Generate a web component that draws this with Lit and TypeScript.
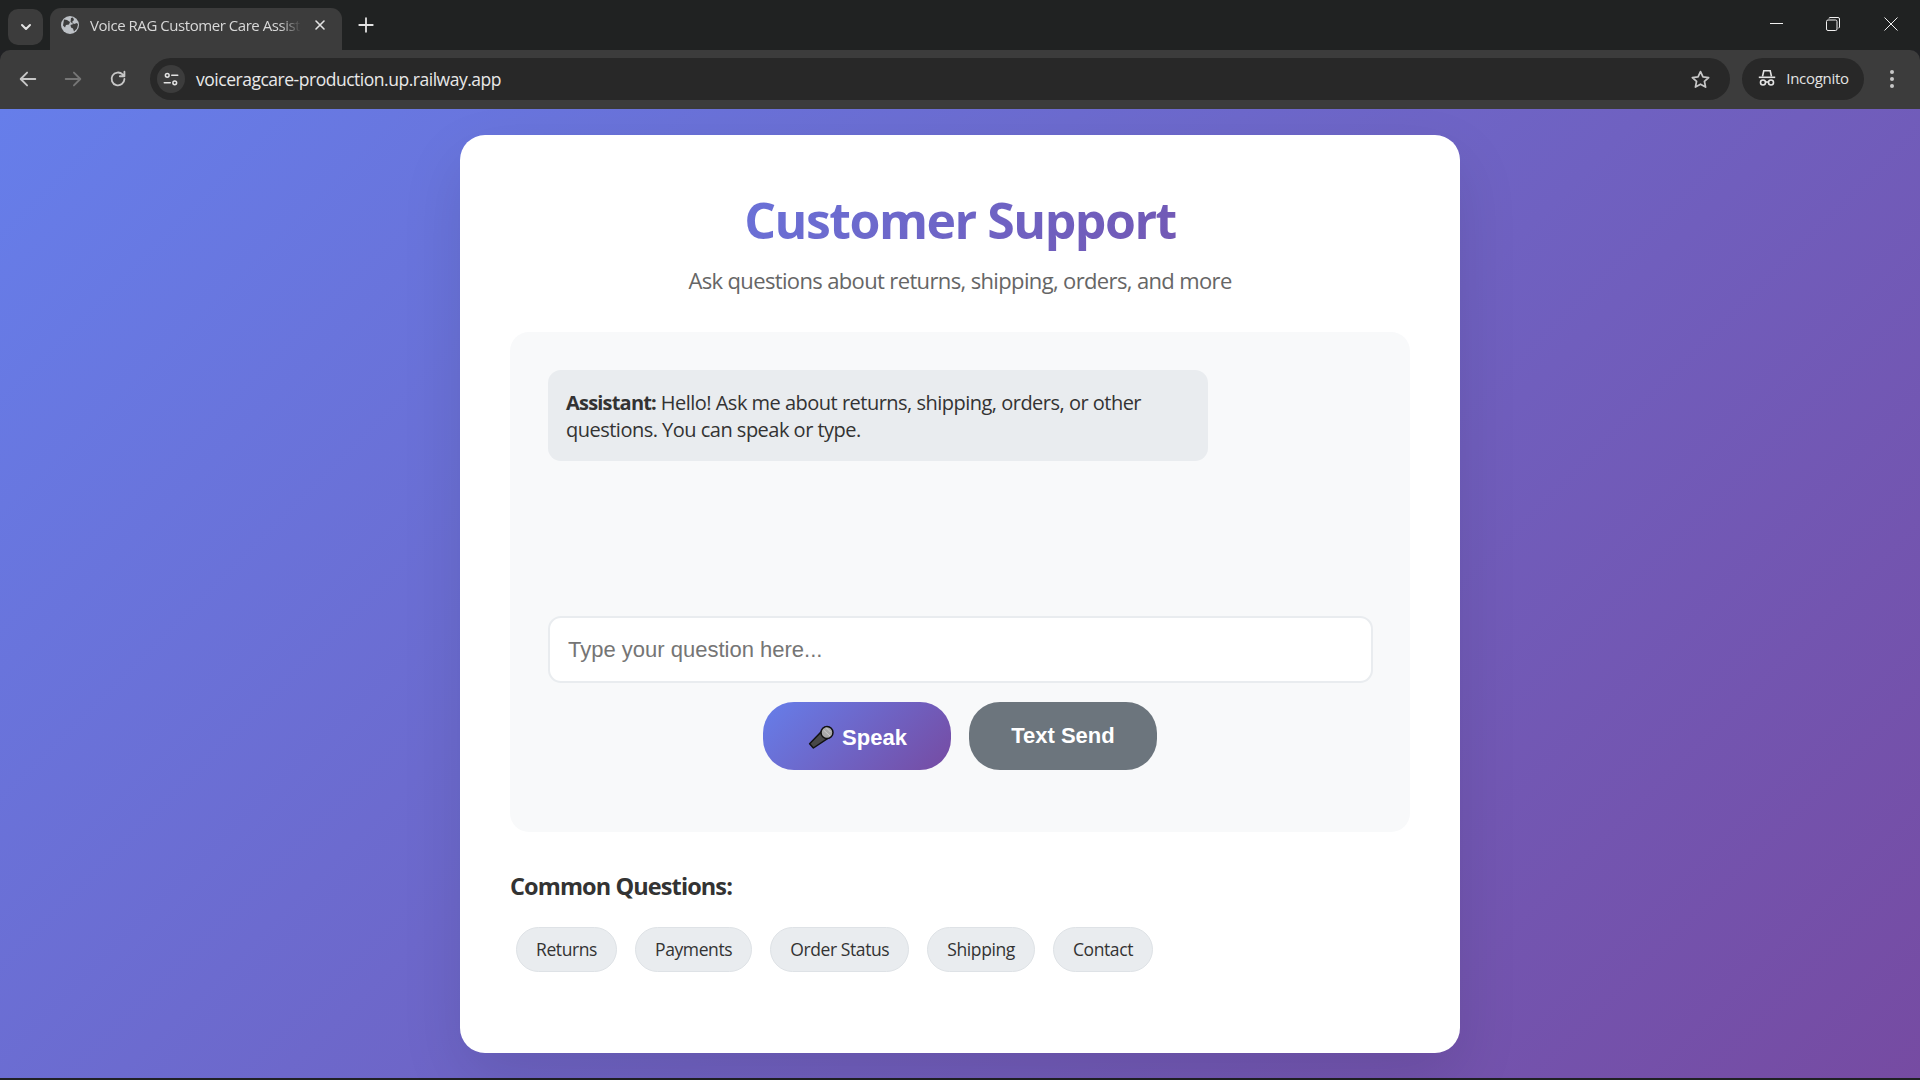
import { LitElement, html, css, svg } from "lit";
import { customElement } from "lit/decorators.js";

const ic = (w: number, body: unknown, vb = "0 0 24 24") => html`<svg width=${w} height=${w} viewBox=${vb} fill="none" stroke="currentColor" stroke-width="2" stroke-linecap="round" stroke-linejoin="round">${body}</svg>`;

@customElement("app-root")
export class AppRoot extends LitElement {
  static styles = css`
    :host { display: flex; flex-direction: column; width: 1920px; height: 1080px; overflow: hidden; background: #202124; font-family: "Open Sans", "Noto Sans", sans-serif; }
    * { box-sizing: border-box; }
    .tabstrip { height: 50px; background: #202222; display: flex; align-items: flex-end; padding-left: 8px; color: #e3e3e3; flex: none; }
    .tabmenu { width: 35px; height: 36px; margin-bottom: 5px; background: #3c3c3c; border-radius: 10px; display: flex; align-items: center; justify-content: center; }
    .tab { width: 292px; height: 42px; margin-left: 7px; background: #3c3c3c; border-radius: 11px 11px 0 0; display: flex; align-items: center; padding: 0 14px 8px 11px; gap: 11px; }
    .globe { flex: none; display: flex; color: #bdc1c6; }
    .tabtitle { flex: 1; min-width: 0; overflow: hidden; white-space: nowrap; font-size: 15px; letter-spacing: -0.45px; color: #d8d8d8; -webkit-mask-image: linear-gradient(90deg, #000 90%, transparent); mask-image: linear-gradient(90deg, #000 90%, transparent); }
    .tabx { flex: none; display: flex; color: #e3e3e3; }
    .newtab { margin: 0 0 8px 15px; height: 34px; display: flex; align-items: center; }
    .spacer { flex: 1; }
    .winctl { align-self: stretch; display: flex; align-items: center; gap: 43px; padding-right: 22px; padding-bottom: 2px; color: #f0f0f0; }
    .winctl svg { display: block; }
    .winctl .close { margin-left: 1px; }
    .toolbar { height: 59px; background: #3c3c3c; border-radius: 10px 10px 0 0; display: flex; align-items: center; padding: 0 0 1px 17px; color: #c7c7c7; flex: none; }
    .navs { display: flex; gap: 23px; align-items: center; margin-right: 21px; }
    .navs .dim { color: #767676; display: flex; }
    .navs svg { display: block; }
    .omni { flex: 1; height: 42px; background: #282828; border-radius: 21px; display: flex; align-items: center; padding: 0 19px 0 7px; }
    .site { width: 28px; height: 28px; border-radius: 50%; background: #3c3c3c; display: flex; align-items: center; justify-content: center; color: #e3e3e3; margin-right: 11px; }
    .url { flex: 1; font-size: 17.5px; letter-spacing: -0.48px; color: #e8e8e8; }
    .star { display: flex; }
    .incog { width: 122px; height: 42px; margin-left: 12px; background: #282828; border-radius: 21px; display: flex; align-items: center; justify-content: center; gap: 10px; padding: 0 0 2px 1px; font-size: 15px; letter-spacing: -0.3px; color: #e3e3e3; }
    .more { width: 56px; display: flex; justify-content: center; }
    .page { flex: none; height: 969px; background: linear-gradient(135deg, #667eea 0%, #764ba2 100%); display: flex; justify-content: center; padding-top: 26px; }
    .card { width: 1000px; height: 918px; background: #fff; border-radius: 25px; padding: 51px 50px 50px; box-shadow: 0 25px 62px rgba(0, 0, 0, .1); display: flex; flex-direction: column; }
    h1 { margin: 0; text-align: center; background: linear-gradient(135deg, #667eea 0%, #764ba2 100%); -webkit-background-clip: text; background-clip: text; color: transparent; -webkit-text-fill-color: transparent; font-size: 50px; line-height: 68px; font-weight: 700; letter-spacing: -1.5px; }
    .sub { margin: 11px 0 0; text-align: center; color: #666; font-size: 22px; line-height: 30px; letter-spacing: -0.64px; }
    .chat { margin-top: 37px; height: 500px; background: #f8f9fa; border-radius: 19px; padding: 38px; display: flex; flex-direction: column; }
    .msg { width: 660px; height: 91px; background: #e9ecef; border-radius: 13px; padding: 19px 18px 0; font-size: 20px; line-height: 27px; letter-spacing: -0.51px; color: #333; }
    .msg b { font-weight: 700; letter-spacing: -0.8px; }
    input { display: block; margin-top: 155px; width: 825px; height: 67px; border: 2px solid #e9ecef; border-radius: 13px; background: #fff; padding: 0 18px; font-family: "Liberation Sans", Arial, sans-serif; font-size: 22px; outline: none; }
    input::placeholder { color: #757575; opacity: 1; }
    .btns { display: flex; justify-content: center; gap: 18px; margin-top: 19px; }
    .btn { width: 188px; height: 68px; border: 0; border-radius: 31px; color: #fff; font-family: "Liberation Sans", Arial, sans-serif; font-size: 22px; font-weight: 700; display: flex; align-items: center; justify-content: center; gap: 8px; padding: 0; }
    .speak { background: linear-gradient(135deg, #667eea 0%, #764ba2 100%); padding: 4px 0 0 1px; }
    .send { background: #6c757d; }
    h3 { margin: 38px 0 0; color: #333; font-size: 23.5px; line-height: 32px; font-weight: 700; letter-spacing: -0.9px; }
    .chips { display: flex; gap: 18px; margin: 25px 0 0 6px; }
    .chip { height: 45px; padding: 0 19px; background: #e9ecef; border: 1px solid #dee2e6; border-radius: 25px; color: #333; font-family: inherit; font-size: 17.5px; letter-spacing: -0.4px; padding-bottom: 1px; display: flex; align-items: center; }
  `;

  render() {
    const chips = ["Returns", "Payments", "Order Status", "Shipping", "Contact"];
    return html`
      <div class="tabstrip">
        <div class="tabmenu">${ic(16, svg`<path d="M6 9l6 6 6-6" stroke-width="3"/>`)}</div>
        <div class="tab">
          <span class="globe"><svg width="18" height="18" viewBox="0 0 18 18"><circle cx="9" cy="9" r="9" fill="#bdc1c6"/><path d="M3 3.500l3 .5 3 2-1 2.500-3 .5-1 2.500-2-2zM12 1.500l1 2.500-2 2 2 2 3-1 1 1.500-1 4-3 3-1-3-2-1-.5-2.500 3-1-3-2 .5-4z" fill="#3c3c3c"/></svg></span>
          <span class="tabtitle">Voice RAG Customer Care Assistant</span>
          <span class="tabx">${ic(16, svg`<path d="M6 6l12 12M18 6L6 18" stroke-width="2.400"/>`)}</span>
        </div>
        <div class="newtab">${ic(18, svg`<path d="M12 3v18M3 12h18" stroke-width="2.400"/>`)}</div>
        <div class="spacer"></div>
        <div class="winctl">
          <svg width="13" height="13" viewBox="0 0 13 13"><path d="M0 5.500h13" stroke="currentColor"/></svg>
          <svg width="14" height="14" viewBox="0 0 14 14" fill="none" stroke="currentColor"><path d="M3 1.500Q3 .5 4 .5h8q1.500 0 1.500 1.500v8q0 1-1 1"/><rect x=".5" y="3" width="10.500" height="10.500" rx="1.500"/></svg>
          <svg class="close" width="14" height="14" viewBox="0 0 14 14"><path d="M.5.5l13 13M13.500.5l-13 13" stroke="currentColor"/></svg>
        </div>
      </div>
      <div class="toolbar">
        <div class="navs">
          ${ic(22, svg`<path d="M20 12H5M11 5l-7 7 7 7"/>`)}
          <span class="dim">${ic(22, svg`<path d="M4 12h15M13 5l7 7-7 7"/>`)}</span>
          ${ic(22, svg`<path d="M19 12a7 7 0 1 1-2-5l2 2M19 4v5h-5"/>`)}
        </div>
        <div class="omni">
          <div class="site">${ic(18, svg`<circle cx="7" cy="7" r="2.500"/><path d="M13 7h8M3 17h8"/><circle cx="17" cy="17" r="2.500"/>`)}</div>
          <div class="url">voiceragcare-production.up.railway.app</div>
          <span class="star">${ic(21, svg`<path d="M12 3l2.800 6 6.500.8-4.800 4.400 1.300 6.500-5.800-3.300-5.800 3.300 1.300-6.500-4.800-4.400 6.500-.8z"/>`)}</span>
        </div>
        <div class="incog">
          <svg width="18" height="18" viewBox="0 0 18 18" fill="none" stroke="#e3e3e3" stroke-width="1.600"><path d="M4.500 7.500 5.800 1.800h6.400l1.300 5.700"/><path d="M.8 8.300h16.400"/><circle cx="5" cy="13.500" r="2.500"/><circle cx="13" cy="13.500" r="2.500"/><path d="M7.500 13h3"/></svg>
          <span>Incognito</span>
        </div>
        <div class="more"><svg width="6" height="20" viewBox="0 0 6 20" fill="currentColor"><circle cx="3" cy="3" r="2"/><circle cx="3" cy="10" r="2"/><circle cx="3" cy="17" r="2"/></svg></div>
      </div>
      <div class="page">
        <div class="card">
          <h1>Customer Support</h1>
          <p class="sub">Ask questions about returns, shipping, orders, and more</p>
          <div class="chat">
            <div class="msg"><b>Assistant:</b> Hello! Ask me about returns, shipping, orders, or other questions. You can speak or type.</div>
            <input placeholder="Type your question here..." />
            <div class="btns">
              <button class="btn speak">
                <svg width="26" height="26" viewBox="0 0 26 26"><path d="M1.600 18.700 15.900 4.100 22.100 11.900 5.400 23z" fill="#484848" stroke="#111" stroke-width="1.500" stroke-linejoin="round"/><circle cx="19" cy="7.500" r="6" fill="#a9a9a9" stroke="#111" stroke-width="1.500"/><path d="M15.500 5l6.500 6M18 2.500l4.500 4.500" stroke="#ccc"/></svg>
                <span>Speak</span>
              </button>
              <button class="btn send">Text Send</button>
            </div>
          </div>
          <h3>Common Questions:</h3>
          <div class="chips">${chips.map((c) => html`<button class="chip">${c}</button>`)}</div>
        </div>
      </div>
    `;
  }
}
